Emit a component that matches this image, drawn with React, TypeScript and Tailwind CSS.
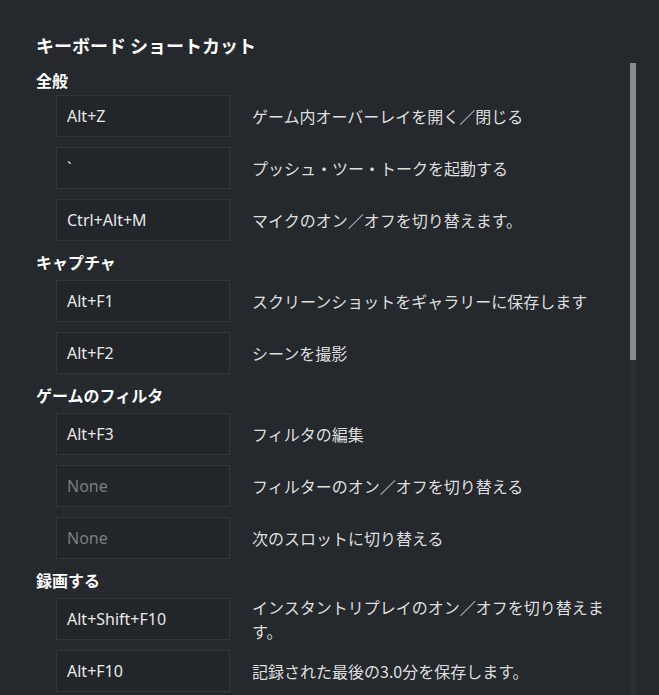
import React from "react";

type Row = { key: string; desc: string; none?: boolean };
type Section = { title: string; rows: Row[]; first?: boolean };

const sections: Section[] = [
  {
    title: "全般",
    first: true,
    rows: [
      { key: "Alt+Z", desc: "ゲーム内オーバーレイを開く／閉じる" },
      { key: "`", desc: "プッシュ・ツー・トークを起動する" },
      { key: "Ctrl+Alt+M", desc: "マイクのオン／オフを切り替えます。" },
    ],
  },
  {
    title: "キャプチャ",
    rows: [
      { key: "Alt+F1", desc: "スクリーンショットをギャラリーに保存します" },
      { key: "Alt+F2", desc: "シーンを撮影" },
    ],
  },
  {
    title: "ゲームのフィルタ",
    rows: [
      { key: "Alt+F3", desc: "フィルタの編集" },
      { key: "None", desc: "フィルターのオン／オフを切り替える", none: true },
      { key: "None", desc: "次のスロットに切り替える", none: true },
    ],
  },
  {
    title: "録画する",
    rows: [
      { key: "Alt+Shift+F10", desc: "インスタントリプレイのオン／オフを切り替えます。" },
      { key: "Alt+F10", desc: "記録された最後の3.0分を保存します。" },
    ],
  },
];

const jp = "font-['Noto_Sans_CJK_JP','Noto_Sans',sans-serif]";
const latin = "font-['Noto_Sans','Noto_Sans_CJK_JP',sans-serif]";

export default function App() {
  return (
    <div className="w-[659px] h-[695px] overflow-hidden bg-[#25292e] flex">
      <div className={`w-[630px] pl-[36px] pt-[33px] ${jp}`}>
        <div className="h-[24px] leading-[24px] text-[18px] font-bold text-white">
          キーボード ショートカット
        </div>
        {sections.map((s, si) => (
          <div key={si} className={s.first ? "mt-[12px]" : "mt-[10px]"}>
            <div
              className={`h-[22px] leading-[22px] text-[16px] font-bold text-white ${
                s.first ? "mb-[4px]" : "mb-[7px]"
              }`}
            >
              {s.title}
            </div>
            <div className="flex flex-col gap-[10px]">
              {s.rows.map((r, ri) => (
                <div key={ri} className="flex items-center ml-[20px] h-[42px]">
                  <div
                    className={`w-[174px] h-[42px] shrink-0 border border-[#32373c] bg-[#222529] flex items-center px-[10px] text-[16px] ${latin} ${
                      r.none ? "text-[#7b7e82]" : "text-[#e8e8e8]"
                    }`}
                  >
                    {r.key}
                  </div>
                  <div className="ml-[22px] w-[360px] text-[16px] leading-[24px] text-[#dedede]">
                    {r.desc}
                  </div>
                </div>
              ))}
            </div>
          </div>
        ))}
      </div>
      <div className="w-[6px] shrink-0 flex flex-col">
        <div className="mt-[63px] h-[297px] bg-[#888a8c]" />
        <div className="flex-1 bg-[#2a2e33]" />
      </div>
    </div>
  );
}
